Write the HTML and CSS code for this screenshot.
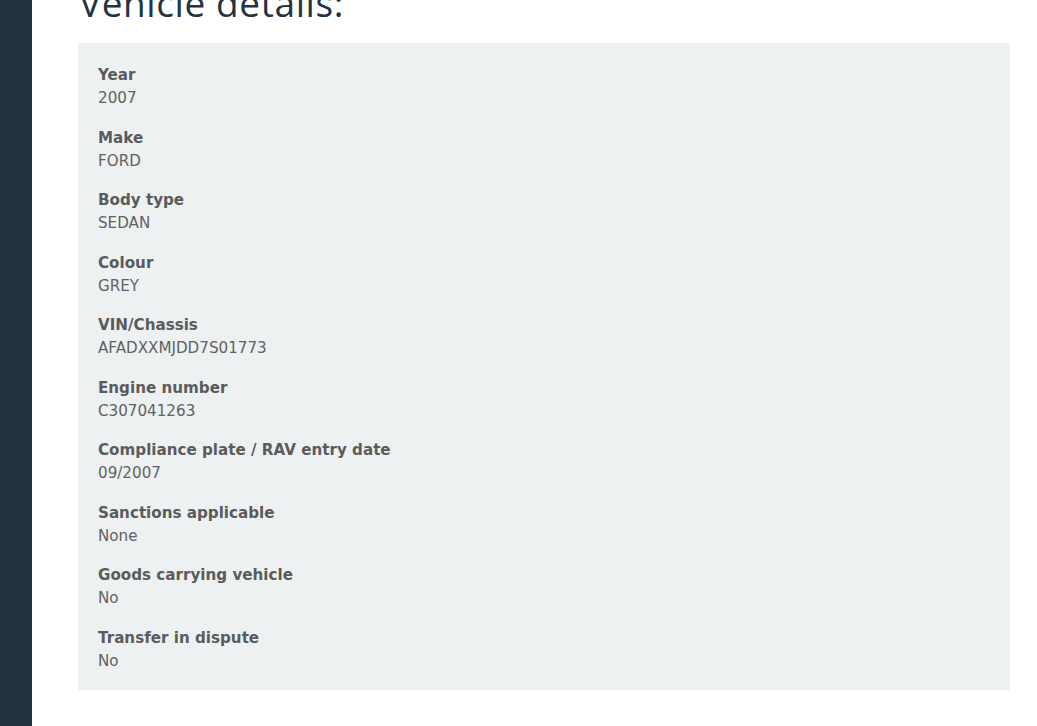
FILE: index.html
```html
<!DOCTYPE html>
<html lang="en">
<head>
    <meta charset="UTF-8">
    <meta name="viewport" content="width=device-width, initial-scale=1.0">
    <title>Vehicle details</title>
    <link rel="stylesheet" href="styles.css">
</head>
<body>
    <div class="layout">
        <aside class="sidebar"></aside>
        <main class="content">
            <h1>Vehicle details:</h1>
            <dl class="details">
                <div class="item"><dt>Year</dt><dd>2007</dd></div>
                <div class="item"><dt>Make</dt><dd>FORD</dd></div>
                <div class="item"><dt>Body type</dt><dd>SEDAN</dd></div>
                <div class="item"><dt>Colour</dt><dd>GREY</dd></div>
                <div class="item"><dt>VIN/Chassis</dt><dd>AFADXXMJDD7S01773</dd></div>
                <div class="item"><dt>Engine number</dt><dd>C307041263</dd></div>
                <div class="item"><dt>Compliance plate / RAV entry date</dt><dd>09/2007</dd></div>
                <div class="item"><dt>Sanctions applicable</dt><dd>None</dd></div>
                <div class="item"><dt>Goods carrying vehicle</dt><dd>No</dd></div>
                <div class="item"><dt>Transfer in dispute</dt><dd>No</dd></div>
            </dl>
        </main>
    </div>
</body>
</html>
```

FILE: styles.css
```css
html, body {
    margin: 0;
    height: 100%;
    background: #ffffff;
    overflow: hidden;
}
.layout {
    display: grid;
    grid-template-columns: 32px 1fr;
    min-height: 100%;
}
.sidebar {
    background-color: #233342;
}
.content {
    padding: 0 27px 0 46px;
}
h1 {
    font-family: "Open Sans", sans-serif;
    font-weight: 400;
    font-size: 37px;
    line-height: 37px;
    letter-spacing: 0.6px;
    color: #233342;
    margin: -16px 0 22px 1px;
}
.details {
    background-color: #edf1f2;
    margin: 0;
    padding: 21px 20px 17px;
    font-family: "DejaVu Sans", Verdana, sans-serif;
    font-size: 15.15px;
}
.item {
    margin-bottom: 16.5px;
}
.item:last-child {
    margin-bottom: 0;
}
dt {
    font-weight: 700;
    color: #5b5b5b;
    line-height: 23px;
}
dd {
    margin: 0;
    color: #626262;
    line-height: 23px;
}
```
